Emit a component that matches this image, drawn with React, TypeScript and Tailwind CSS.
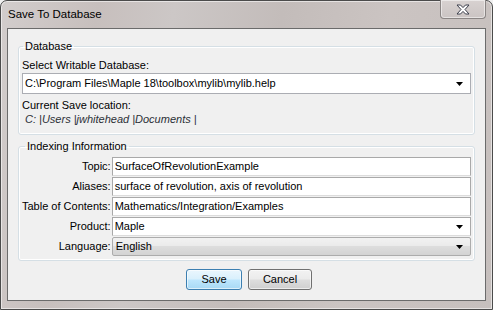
import React from 'react';

const font = { fontFamily: '"Liberation Sans", Arial, sans-serif' };

const Arrow: React.FC = () => (
  <svg width="7" height="4" viewBox="0 0 7 4" className="shrink-0">
    <path d="M0 0h7L3.5 4z" fill="#000" />
  </svg>
);

const rows: { label: string; value: string; kind: 'text' | 'combo' | 'select' }[] = [
  { label: 'Topic:', value: 'SurfaceOfRevolutionExample', kind: 'text' },
  { label: 'Aliases:', value: 'surface of revolution, axis of revolution', kind: 'text' },
  { label: 'Table of Contents:', value: 'Mathematics/Integration/Examples', kind: 'text' },
  { label: 'Product:', value: 'Maple', kind: 'combo' },
  { label: 'Language:', value: 'English', kind: 'select' },
];

const App: React.FC = () => {
  return (
    <div className="w-[493px] h-[310px] overflow-hidden bg-[#f0f0f0]" style={font}>
      <div className="w-full h-full flex flex-col border border-[#4b4b4b] rounded-t-[7px] bg-[linear-gradient(100deg,#d2cdcc_0%,#c7bfbd_18%,#ccc7c6_32%,#c3bcba_52%,#cbc4c2_72%,#c6bfbd_100%)] shadow-[inset_0_0_0_1px_rgba(255,255,255,0.55)]">
        {/* title bar */}
        <div className="h-[27px] flex shrink-0">
          <div className="flex-1 flex items-center pl-[7px] pt-[1px] text-[11.5px] text-black">Save To Database</div>
          <div className="mr-[6px] w-[46px] h-[19px] -mt-px flex items-center justify-center rounded-b-[4px] border border-t-0 border-[#8a8584] shadow-[inset_0_0_0_1px_rgba(255,255,255,0.5)] bg-[linear-gradient(to_bottom,#d8d2d1,#cbc4c3)]">
            <svg width="14" height="11" viewBox="0 0 14 11">
              <path
                d="M1 1h3.5L7 3.6 9.5 1H13L9 5.5 13 10H9.5L7 7.4 4.5 10H1L5 5.5z"
                fill="#fff"
                stroke="#3b3d4a"
                strokeWidth="1"
                strokeLinejoin="round"
              />
            </svg>
          </div>
        </div>

        {/* body */}
        <div className="flex-1 flex flex-col px-[6px] pb-[8px]">
          <div className="flex-1 flex flex-col bg-[#f0f0f0] border border-[#6b6b6b] text-[11px] leading-[13px] text-black">
            <fieldset className="mx-[10px] mt-[11px] border border-[#d5dfe5] rounded-[3px] px-[3px] pb-[8px] shadow-[inset_0_0_0_1px_#fff]">
              <legend className="ml-[1px] px-[2px]">Database</legend>
              <div className="mt-[6px]">Select Writable Database:</div>
              <div className="mt-px h-[21px] flex items-center bg-white border border-[#abadb3] pl-[2px] pr-[7px]">
                <span className="flex-1 whitespace-nowrap">C:\Program Files\Maple 18\toolbox\mylib\mylib.help</span>
                <Arrow />
              </div>
              <div className="mt-[5px]">Current Save location:</div>
              <div className="mt-px pl-[3px] italic text-[#2b2f36]">C: |Users |jwhitehead |Documents |</div>
            </fieldset>

            <fieldset className="mx-[10px] mt-[5px] border border-[#d5dfe5] rounded-[3px] pl-[3px] pr-[3px] pb-[4px] shadow-[inset_0_0_0_1px_#fff]">
              <legend className="ml-[3px] px-[2px]">Indexing Information</legend>
              <div className="mt-[4px] grid grid-cols-[auto_1fr] gap-y-px">
                {rows.map((r) => (
                  <React.Fragment key={r.label}>
                    <div className="h-[19px] flex items-center justify-end pr-px whitespace-nowrap">{r.label}</div>
                    {r.kind === 'select' ? (
                      <div className="h-[19px] flex items-center pl-[3px] pr-[7px] border border-[#acacac] rounded-[2px] bg-[linear-gradient(to_bottom,#f2f2f2_0%,#ebebeb_45%,#dddddd_50%,#d3d3d3_100%)]">
                        <span className="flex-1">{r.value}</span>
                        <Arrow />
                      </div>
                    ) : (
                      <div className="h-[19px] flex items-center pl-[2px] pr-[7px] bg-white border border-[#a9a9a9] border-b-[#dcdcdc]">
                        <span className="flex-1 whitespace-nowrap">{r.value}</span>
                        {r.kind === 'combo' && <Arrow />}
                      </div>
                    )}
                  </React.Fragment>
                ))}
              </div>
            </fieldset>

            <div className="mt-[8px] flex justify-center gap-[6px] pl-[5px]">
              <button className="w-[56px] h-[21px] rounded-[3px] border border-[#3c7fb1] bg-[linear-gradient(to_bottom,#eaf6fd_0%,#d9f0fc_48%,#bee6fd_52%,#a7d9f5_100%)] shadow-[inset_0_0_0_1px_rgba(255,255,255,0.6)] text-[11px]">
                Save
              </button>
              <button className="w-[64px] h-[21px] rounded-[3px] border border-[#707070] bg-[linear-gradient(to_bottom,#f2f2f2_0%,#ebebeb_48%,#dddddd_52%,#cfcfcf_100%)] shadow-[inset_0_0_0_1px_rgba(255,255,255,0.6)] text-[11px]">
                Cancel
              </button>
            </div>
          </div>
        </div>
      </div>
    </div>
  );
};

export default App;
